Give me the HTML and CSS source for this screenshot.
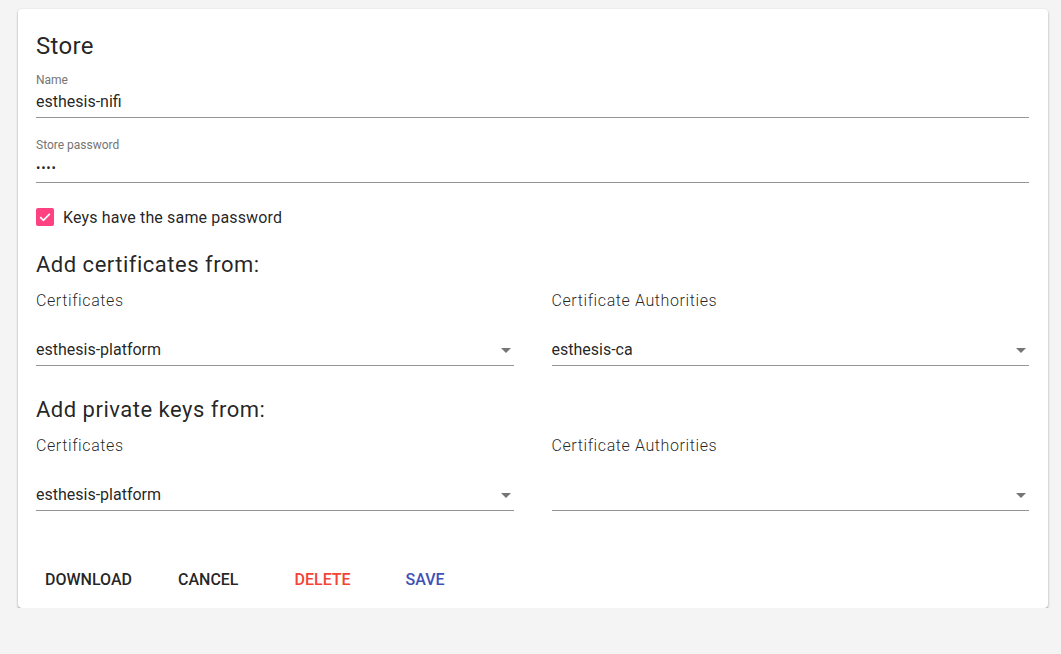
FILE: index.html
```html
<!DOCTYPE html>
<html>
<head>
<meta charset="utf-8">
<link rel="stylesheet" href="styles.css">
</head>
<body>
<div class="card">
  <h1 class="title">Store</h1>
  <div class="field first">
    <div class="label">Name</div>
    <div class="value">esthesis-nifi</div>
  </div>
  <div class="field">
    <div class="label">Store password</div>
    <div class="value dots">••••</div>
  </div>
  <div class="check-row">
    <span class="checkbox">
      <svg width="18" height="18" viewBox="0 0 18 18"><path d="M4.2 9.2 L7.4 12.3 L13.8 5.9" fill="none" stroke="#fff" stroke-width="1.8"/></svg>
    </span>
    <span class="check-label">Keys have the same password</span>
  </div>
  <h2 class="section">Add certificates from:</h2>
  <div class="cols">
    <div class="col">
      <div class="col-title">Certificates</div>
      <div class="select"><span class="sel-value">esthesis-platform</span><span class="arrow"></span></div>
    </div>
    <div class="col">
      <div class="col-title">Certificate Authorities</div>
      <div class="select"><span class="sel-value">esthesis-ca</span><span class="arrow"></span></div>
    </div>
  </div>
  <h2 class="section second">Add private keys from:</h2>
  <div class="cols">
    <div class="col">
      <div class="col-title">Certificates</div>
      <div class="select"><span class="sel-value">esthesis-platform</span><span class="arrow"></span></div>
    </div>
    <div class="col">
      <div class="col-title">Certificate Authorities</div>
      <div class="select"><span class="sel-value"></span><span class="arrow"></span></div>
    </div>
  </div>
  <div class="actions">
    <button class="btn">DOWNLOAD</button>
    <button class="btn cancel">CANCEL</button>
    <button class="btn delete">DELETE</button>
    <button class="btn save">SAVE</button>
  </div>
</div>
</body>
</html>
```
FILE: styles.css
```css
html, body {
  margin: 0;
  padding: 0;
  background: #f4f4f4;
}
body {
  padding: 9px 13px 0 18px;
  font-family: Roboto, "Liberation Sans", Arial, sans-serif;
  color: rgba(0, 0, 0, 0.87);
}
.card {
  background: #fff;
  border-radius: 4px;
  box-shadow: 0 1px 3px rgba(0,0,0,0.2), 0 2px 2px rgba(0,0,0,0.14), 0 1px 1px rgba(0,0,0,0.1);
  padding: 21px 19px 11px 18px;
  height: 599px;
  box-sizing: border-box;
}
.title {
  margin: 0;
  font-size: 24px;
  line-height: 32px;
  font-weight: 400;
  letter-spacing: 0.3px;
}
.field {
  margin-top: 19px;
  border-bottom: 1px solid #949494;
  padding-bottom: 5px;
}
.field.first {
  margin-top: 10px;
  padding-bottom: 5px;
}
.label {
  font-size: 12px;
  line-height: 16px;
  color: #757575;
}
.value {
  margin-top: 4px;
  font-size: 16px;
  line-height: 20px;
}
.dots {
  font-size: 13px;
  letter-spacing: 0.8px;
  position: relative;
  top: 1px;
}
.check-row {
  display: flex;
  align-items: center;
  margin-top: 25px;
  height: 18px;
}
.checkbox {
  width: 18px;
  height: 18px;
  background: #ff4081;
  border-radius: 2px;
  display: block;
}
.checkbox svg { display: block; }
.check-label {
  margin-left: 9px;
  font-size: 16px;
  letter-spacing: 0.15px;
}
.section {
  margin: 25px 0 0;
  font-size: 22px;
  line-height: 28px;
  font-weight: 400;
  letter-spacing: 0.5px;
}
.section.second {
  margin-top: 30px;
}
.cols {
  display: flex;
  gap: 38px;
  margin-top: 10px;
}
.col {
  flex: 1;
}
.col-title {
  font-size: 16px;
  line-height: 24px;
  font-weight: 300;
  letter-spacing: 0.6px;
  color: rgba(0,0,0,0.87);
}
.select {
  margin-top: 27px;
  display: flex;
  align-items: center;
  justify-content: space-between;
  height: 20px;
  padding-bottom: 5px;
  border-bottom: 1px solid #949494;
}
.sel-value {
  font-size: 16px;
  line-height: 20px;
}
.arrow {
  width: 0;
  height: 0;
  border-left: 5px solid transparent;
  border-right: 5px solid transparent;
  border-top: 5px solid #757575;
  margin-right: 3px;
}
.actions {
  display: flex;
  margin-top: 50px;
  height: 36px;
  align-items: center;
}
.btn {
  background: none;
  border: none;
  font-family: Roboto, "Liberation Sans", Arial, sans-serif;
  font-size: 16px;
  font-weight: 500;
  color: rgba(0,0,0,0.87);
  padding: 0 9px;
  height: 36px;
  cursor: pointer;
}
.cancel { margin-left: 28px; }
.delete { margin-left: 38px; color: #f44336; }
.save { margin-left: 37px; color: #3f51b5; }
```
